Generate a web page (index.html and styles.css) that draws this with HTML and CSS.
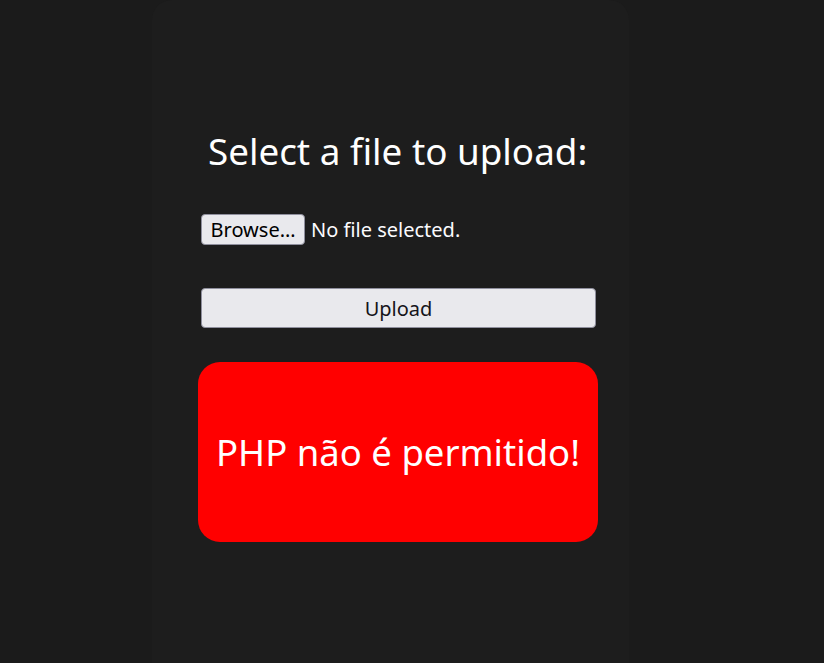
FILE: index.html
```html
<!DOCTYPE html>
<html>
<head>
<meta charset="utf-8">
<link rel="stylesheet" href="styles.css">
</head>
<body>
<main class="panel">
  <form class="upload-form">
    <h1 class="title">Select a file to upload:</h1>
    <div class="file-row">
      <span class="browse-btn">Browse…</span>
      <span class="file-status">No file selected.</span>
    </div>
    <button type="button" class="upload-btn">Upload</button>
  </form>
  <div class="alert">PHP não é permitido!</div>
</main>
</body>
</html>
```
FILE: styles.css
```css
html, body {
  margin: 0;
  padding: 0;
  height: 100%;
  background: #1b1b1b;
  overflow: hidden;
}
body {
  font-family: "Noto Sans", "Open Sans", sans-serif;
  color: #fbfbfe;
}
.panel {
  box-sizing: border-box;
  margin-left: 152px;
  width: 477px;
  height: 100%;
  background: #1d1d1d;
  border-radius: 20px 20px 0 0;
  padding: 126px 0 0 46px;
}
.upload-form {
  display: flex;
  flex-direction: column;
  align-items: flex-start;
}
.title {
  margin: 0 0 0 10px;
  font-size: 36.8px;
  font-weight: 400;
  line-height: 50px;
  color: #ffffff;
}
.file-row {
  margin: 38px 0 0 3px;
  display: flex;
  align-items: center;
  gap: 6px;
}
.browse-btn {
  box-sizing: border-box;
  height: 31px;
  width: 104px;
  display: flex;
  align-items: center;
  justify-content: center;
  background: #e9e9ed;
  border: 1px solid #8f8f9d;
  border-radius: 4px;
  color: #000;
  font-size: 20px;
}
.file-status {
  font-size: 20px;
  color: #fbfbfe;
}
.upload-btn {
  margin: 43px 0 0 3px;
  box-sizing: border-box;
  width: 395px;
  height: 40px;
  background: #e9e9ed;
  border: 1px solid #8f8f9d;
  border-radius: 4px;
  color: #15141a;
  font-family: inherit;
  font-size: 20px;
  padding: 0;
}
.alert {
  margin-top: 34px;
  width: 400px;
  height: 180px;
  background: #ff0000;
  border-radius: 22px;
  display: flex;
  align-items: center;
  justify-content: center;
  font-size: 36.5px;
  color: #ffffff;
}
```
